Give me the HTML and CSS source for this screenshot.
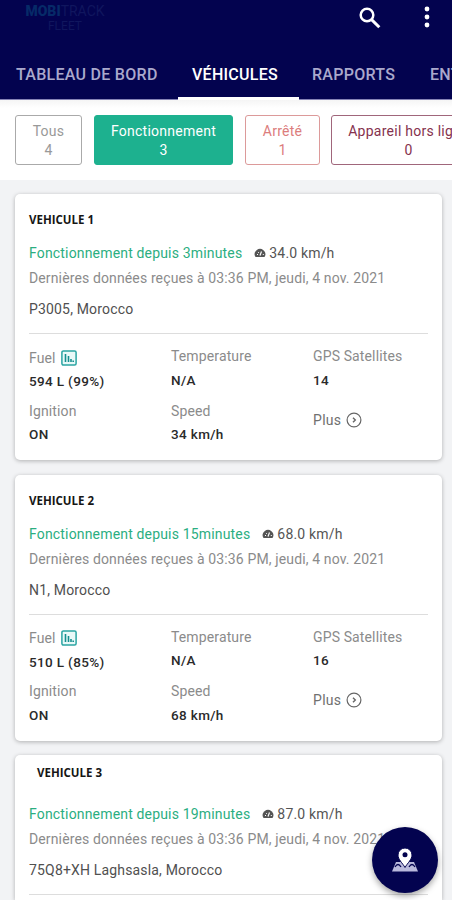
FILE: index.html
```html
<!DOCTYPE html>
<html lang="fr">
<head>
<meta charset="utf-8">
<title>Mobitrack Fleet</title>
<link rel="stylesheet" href="styles.css">
</head>
<body>
<svg class="defs" width="0" height="0">
  <symbol id="gauge" viewBox="0 0 12 10"><path d="M1.500 9A5.300 5.300 0 1 1 10.500 9Z" fill="#555"/><path d="M3 6.500h1M4 4l.8.8M8.800 6.500h1" stroke="#fff" stroke-width="1"/><path d="M6 7.500L7.500 3.500" stroke="#fff" stroke-width="1.200"/></symbol>
  <symbol id="chart" viewBox="0 0 16 16"><rect x=".9" y=".9" width="14.200" height="14.200" rx="1.500" fill="#e9f9f8" stroke="#2ba5a3" stroke-width="1.500"/><path d="M4.500 4v8M7.500 6v6M10 9v3M12.200 10.500V12" stroke="#168f8f" stroke-width="1.600"/></symbol>
  <symbol id="more" viewBox="0 0 16 16"><circle cx="8" cy="8" r="6.900" fill="none" stroke="#666" stroke-width="1.200"/><path d="M7 5.700L9.300 8L7 10.300" fill="none" stroke="#666" stroke-width="1.400"/></symbol>
</svg>
<header class="header">
  <div class="bar">
    <div class="logo"><div class="logo-top"><b>MOBI</b>TRACK</div><div class="logo-sub">FLEET</div></div>
    <svg class="search" viewBox="0 0 22 22"><circle cx="8" cy="8" r="6.300" fill="none" stroke="#fff" stroke-width="2.500"/><path d="M12.600 12.600L20.300 20.300" stroke="#fff" stroke-width="3"/></svg>
    <svg class="dots" viewBox="0 0 6 22"><g fill="#fff"><circle cx="3" cy="3" r="2.400"/><circle cx="3" cy="11" r="2.400"/><circle cx="3" cy="19" r="2.400"/></g></svg>
  </div>
  <nav class="tabs">
    <a class="tab t1"><span>TABLEAU DE BORD</span></a>
    <a class="tab t2 active"><span>VÉHICULES</span></a>
    <a class="tab t3"><span>RAPPORTS</span></a>
    <a class="tab t4"><span>ENTRETIEN</span></a>
  </nav>
</header>
<section class="chips">
  <div class="chip all"><span>Tous</span><span>4</span></div>
  <div class="chip running"><span>Fonctionnement</span><span>3</span></div>
  <div class="chip stopped"><span>Arrêté</span><span>1</span></div>
  <div class="chip offline"><span>Appareil hors ligne</span><span>0</span></div>
</section>
<main class="list">
  <article class="card">
    <h2>VEHICULE 1</h2>
    <div class="status"><span class="since">Fonctionnement depuis 3minutes</span><svg class="gauge"><use href="#gauge"/></svg><span class="kmh">34.0 km/h</span></div>
    <p class="received">Dernières données reçues à 03:36 PM, jeudi, 4 nov. 2021</p>
    <p class="place">P3005, Morocco</p>
    <div class="metrics">
      <div class="metric fuel"><span class="label">Fuel <svg class="chart"><use href="#chart"/></svg></span><span class="value">594 L (99%)</span></div>
      <div class="metric"><span class="label">Temperature</span><span class="value">N/A</span></div>
      <div class="metric"><span class="label">GPS Satellites</span><span class="value">14</span></div>
      <div class="metric"><span class="label">Ignition</span><span class="value">ON</span></div>
      <div class="metric"><span class="label">Speed</span><span class="value">34 km/h</span></div>
      <a class="plus">Plus <svg class="more"><use href="#more"/></svg></a>
    </div>
  </article>
  <article class="card">
    <h2>VEHICULE 2</h2>
    <div class="status"><span class="since">Fonctionnement depuis 15minutes</span><svg class="gauge"><use href="#gauge"/></svg><span class="kmh">68.0 km/h</span></div>
    <p class="received">Dernières données reçues à 03:36 PM, jeudi, 4 nov. 2021</p>
    <p class="place">N1, Morocco</p>
    <div class="metrics">
      <div class="metric fuel"><span class="label">Fuel <svg class="chart"><use href="#chart"/></svg></span><span class="value">510 L (85%)</span></div>
      <div class="metric"><span class="label">Temperature</span><span class="value">N/A</span></div>
      <div class="metric"><span class="label">GPS Satellites</span><span class="value">16</span></div>
      <div class="metric"><span class="label">Ignition</span><span class="value">ON</span></div>
      <div class="metric"><span class="label">Speed</span><span class="value">68 km/h</span></div>
      <a class="plus">Plus <svg class="more"><use href="#more"/></svg></a>
    </div>
  </article>
  <article class="card third">
    <h2>VEHICULE 3</h2>
    <div class="status"><span class="since">Fonctionnement depuis 19minutes</span><svg class="gauge"><use href="#gauge"/></svg><span class="kmh">87.0 km/h</span></div>
    <p class="received">Dernières données reçues à 03:36 PM, jeudi, 4 nov. 2021</p>
    <p class="place">75Q8+XH Laghsasla, Morocco</p>
    <div class="metrics"></div>
  </article>
</main>
<button class="fab" aria-label="Carte"><svg viewBox="0 0 28 26"><path d="M5 15h18l4 9.500H1z" fill="#b9b9dc"/><path d="M4 20q3-5 6 0M18 20q3-5 6 0" fill="none" stroke="#03034f" stroke-width="1.300"/><path d="M14 20.500C11.500 16 7 12.500 7 8a7 7 0 0 1 14 0C21 12.500 16.500 16 14 20.500Z" fill="#fff" stroke="#03034f" stroke-width="1"/><circle cx="14" cy="7.800" r="2.500" fill="#03034f"/></svg></button>
</body>
</html>
```
FILE: styles.css
```css
* { box-sizing: border-box; }
body { margin: 0; width: 452px; height: 900px; overflow: hidden; position: relative; background: #f2f3f5; font-family: Roboto, "Liberation Sans", sans-serif; font-size: 14px; color: #505050; }
h2, p { margin: 0; }
.defs { display: block; position: absolute; }
svg { flex: none; }
.header { height: 100px; background: #03034f; overflow: hidden; }
.bar { height: 50px; display: flex; align-items: flex-start; padding-top: 4px; }
.logo { width: 82px; margin: -1px 0 0 24px; color: #10165e; font-size: 14px; line-height: 16px; text-align: center; white-space: nowrap; }
.logo b { color: #062a68; font-weight: 900; }
.logo-sub { font-size: 12px; line-height: 14px; }
.search { width: 22px; height: 22px; margin: 3px 0 0 253px; }
.dots { width: 6px; height: 22px; margin: 2px 0 0 43px; }
.tabs { display: flex; height: 50px; width: 560px; }
.tab { flex: none; height: 50px; line-height: 50px; font-size: 16px; font-weight: 500; letter-spacing: .28px; color: #aaa9cc; white-space: nowrap; border-bottom: 1px solid #8583b5; }
.t1 { width: 178px; padding-left: 16px; }
.t2 { width: 121px; padding-left: 14px; }
.t3 { width: 116px; padding-left: 13px; }
.t4 { width: 130px; padding-left: 15px; }
.tab.active { color: #fff; border-bottom: 3px solid #fff; }
.chips { height: 80px; background: linear-gradient(#f5f5f5, #fff 8px); display: flex; padding: 15px 0 0 15px; overflow: hidden; }
.chip { flex: none; height: 50px; border: 1px solid; border-radius: 3px; display: flex; flex-direction: column; align-items: center; padding-top: 6px; line-height: 19px; font-size: 14px; letter-spacing: .25px; }
.all { width: 67px; color: #999; border-color: #aaa; }
.running { width: 139px; margin-left: 12px; color: #fff; background: #1db18f; border-color: #1db18f; }
.stopped { width: 75px; margin-left: 12px; color: #dc7d7d; border-color: #dc9a9a; }
.offline { width: 155px; margin-left: 11px; color: #85324e; border-color: #a0667b; white-space: nowrap; }
.list { padding: 14px 10px 0 15px; display: flex; flex-direction: column; gap: 14.500px; }
.card { height: 266px; flex: none; background: #fff; border-radius: 5px; box-shadow: 0 1px 4px rgba(0,0,0,.28); padding: 17px 14px 0; }
.card h2 { font: bold 11.500px/18px "Open Sans", "Noto Sans", sans-serif; color: #161616; }
.status { display: flex; align-items: center; height: 20px; margin-top: 14px; letter-spacing: .17px; white-space: nowrap; }
.since { color: #2bae81; }
.gauge { width: 12px; height: 10px; margin: 0 3px 0 12px; }
.kmh { color: #555; }
.received { line-height: 20px; margin-top: 5px; color: #8b8b8b; letter-spacing: .13px; white-space: nowrap; }
.place { line-height: 20px; margin-top: 11px; letter-spacing: .17px; }
.metrics { margin-top: 14px; border-top: 1px solid #ddd; display: grid; grid-template-columns: 142px 142px 1fr; grid-template-rows: 54.500px 50px; padding-top: 12px; letter-spacing: .13px; }
.metric { display: flex; flex-direction: column; gap: 3.500px; line-height: 20px; }
.fuel { padding-top: 1.500px; }
.label { color: #8b8b8b; display: flex; align-items: center; gap: 5px; }
.value { color: #2a2a2a; font-weight: 500; font-size: 13.500px; letter-spacing: .35px; }
.chart { width: 16px; height: 16px; }
.plus { display: flex; align-items: center; gap: 5px; height: 20px; margin-top: 9px; color: #707070; letter-spacing: .3px; }
.more { width: 16px; height: 16px; }
.third { height: 145px; padding-top: 9px; border-radius: 5px 5px 0 0; overflow: hidden; }
.third h2 { padding-left: 8px; margin-bottom: 22px; }
.third .metrics { height: 4px; padding: 0; grid-template-rows: none; }
.fab { position: absolute; left: 372px; top: 827px; width: 66px; height: 66px; border: 0; border-radius: 50%; background: #03034f; padding: 0; display: flex; align-items: center; justify-content: center; box-shadow: 0 3px 6px rgba(0,0,0,.35); }
.fab svg { width: 28px; height: 26px; }
```
